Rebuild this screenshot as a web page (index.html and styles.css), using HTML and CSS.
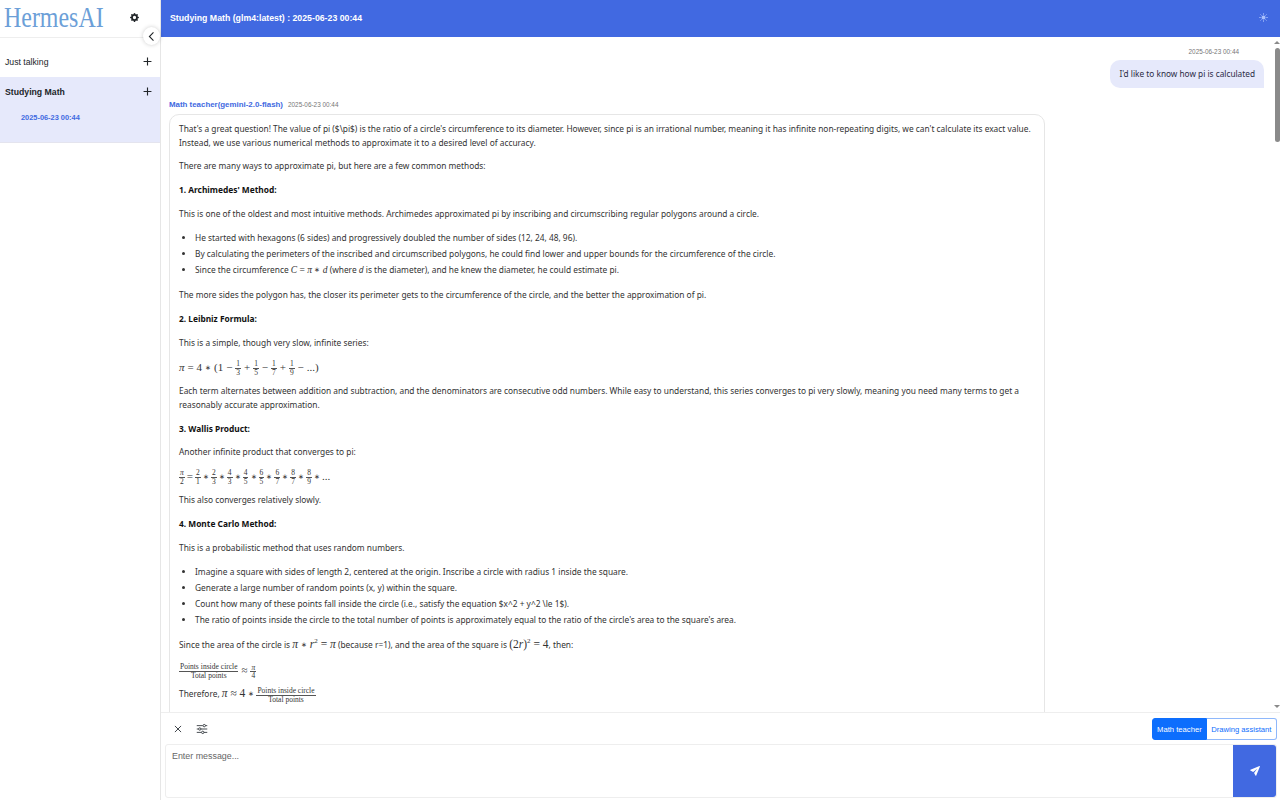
FILE: index.html
```html
<!DOCTYPE html>
<html lang="en">
<head>
	<meta charset="UTF-8">
	<title>HermesAI</title>
	<link rel="stylesheet" href="styles.css">
</head>
<body>
	<div class="app">
		<aside class="sidebar">
			<div class="brand">
				<span class="logo">HermesAI</span>
				<svg class="gear" viewBox="0 0 16 16"><path fill="#212529" d="M9.4 1.1c-.4-1.4-2.4-1.4-2.8 0l-.1.3a1.5 1.5 0 0 1-2.1.9l-.3-.2c-1.3-.7-2.7.7-2 2l.2.3a1.5 1.5 0 0 1-.9 2.1l-.3.1c-1.4.4-1.4 2.4 0 2.8l.3.1a1.5 1.5 0 0 1 .9 2.1l-.2.3c-.7 1.3.7 2.7 2 2l.3-.2a1.5 1.5 0 0 1 2.1.9l.1.3c.4 1.4 2.4 1.4 2.8 0l.1-.3a1.5 1.5 0 0 1 2.1-.9l.3.2c1.3.7 2.7-.7 2-2l-.2-.3a1.5 1.5 0 0 1 .9-2.1l.3-.1c1.4-.4 1.4-2.4 0-2.8l-.3-.1a1.5 1.5 0 0 1-.9-2.1l.2-.3c.7-1.3-.7-2.7-2-2l-.3.2a1.5 1.5 0 0 1-2.1-.9zM8 10.900a2.900 2.900 0 1 1 0-5.800 2.900 2.900 0 0 1 0 5.800z"/></svg>
			</div>
			<button class="collapse"><svg viewBox="0 0 16 16"><path fill="none" stroke="#212529" stroke-width="1.6" stroke-linecap="round" d="M10.5 2.5 5 8l5.500 5.500"/></svg></button>
			<div class="topics">
				<div class="topic">
					<div class="topic-row">
						<span>Just talking</span>
						<svg class="plus" viewBox="0 0 16 16"><path stroke="#212529" stroke-width="2" d="M8 1v14M1 8h14"/></svg>
					</div>
				</div>
				<div class="topic active">
					<div class="topic-row">
						<span>Studying Math</span>
						<svg class="plus" viewBox="0 0 16 16"><path stroke="#212529" stroke-width="2" d="M8 1v14M1 8h14"/></svg>
					</div>
					<div class="session">2025-06-23 00:44</div>
				</div>
			</div>
		</aside>
		<main class="main">
			<header class="header">
				<span>Studying Math (glm4:latest) : 2025-06-23 00:44</span>
				<svg class="sun" viewBox="0 0 16 16"><circle cx="8" cy="8" r="3.5" fill="#a9c0fb"/><path stroke="#a9c0fb" stroke-width="1.4" stroke-linecap="round" d="M8 1v1.500M8 13.500V15M1 8h1.500M13.500 8H15M3 3l1.100 1.100M11.900 11.900 13 13M3 13l1.100-1.100M11.900 4.100 13 3"/></svg>
			</header>
			<div class="chat-wrap">
				<section class="chat">
					<div class="user-msg">
						<div class="time">2025-06-23 00:44</div>
						<div class="user-bubble">I'd like to know how pi is calculated</div>
					</div>
					<div class="bot-msg">
						<div class="bot-head"><span class="bot-name">Math teacher(gemini-2.0-flash)</span><span class="time">2025-06-23 00:44</span></div>
						<div class="bot-bubble">
							<p>That's a great question! The value of pi ($\pi$) is the ratio of a circle's circumference to its diameter. However, since pi is an irrational number, meaning it has infinite non-repeating digits, we can't calculate its exact value. Instead, we use various numerical methods to approximate it to a desired level of accuracy.</p>
							<p>There are many ways to approximate pi, but here are a few common methods:</p>
							<p><strong>1. Archimedes' Method:</strong></p>
							<p>This is one of the oldest and most intuitive methods. Archimedes approximated pi by inscribing and circumscribing regular polygons around a circle.</p>
							<ul>
								<li>He started with hexagons (6 sides) and progressively doubled the number of sides (12, 24, 48, 96).</li>
								<li>By calculating the perimeters of the inscribed and circumscribed polygons, he could find lower and upper bounds for the circumference of the circle.</li>
								<li>Since the circumference <span class="m"><i>C</i> = <i>π</i> <span class="ast">∗</span> <i>d</i></span> (where <i>d</i> is the diameter), and he knew the diameter, he could estimate pi.</li>
							</ul>
							<p>The more sides the polygon has, the closer its perimeter gets to the circumference of the circle, and the better the approximation of pi.</p>
							<p><strong>2. Leibniz Formula:</strong></p>
							<p>This is a simple, though very slow, infinite series:</p>
							<p class="formula m"><i>π</i> = 4 <span class="ast">∗</span> (1 − <span class="frac"><span>1</span><span>3</span></span> + <span class="frac"><span>1</span><span>5</span></span> − <span class="frac"><span>1</span><span>7</span></span> + <span class="frac"><span>1</span><span>9</span></span> − ...)</p>
							<p>Each term alternates between addition and subtraction, and the denominators are consecutive odd numbers. While easy to understand, this series converges to pi very slowly, meaning you need many terms to get a reasonably accurate approximation.</p>
							<p><strong>3. Wallis Product:</strong></p>
							<p>Another infinite product that converges to pi:</p>
							<p class="formula tight m"><span class="frac"><span><i>π</i></span><span>2</span></span> = <span class="frac"><span>2</span><span>1</span></span> <span class="ast">∗</span> <span class="frac"><span>2</span><span>3</span></span> <span class="ast">∗</span> <span class="frac"><span>4</span><span>3</span></span> <span class="ast">∗</span> <span class="frac"><span>4</span><span>5</span></span> <span class="ast">∗</span> <span class="frac"><span>6</span><span>5</span></span> <span class="ast">∗</span> <span class="frac"><span>6</span><span>7</span></span> <span class="ast">∗</span> <span class="frac"><span>8</span><span>7</span></span> <span class="ast">∗</span> <span class="frac"><span>8</span><span>9</span></span> <span class="ast">∗</span> ...</p>
							<p>This also converges relatively slowly.</p>
							<p><strong>4. Monte Carlo Method:</strong></p>
							<p>This is a probabilistic method that uses random numbers.</p>
							<ul>
								<li>Imagine a square with sides of length 2, centered at the origin. Inscribe a circle with radius 1 inside the square.</li>
								<li>Generate a large number of random points (x, y) within the square.</li>
								<li>Count how many of these points fall inside the circle (i.e., satisfy the equation $x^2 + y^2 \le 1$).</li>
								<li>The ratio of points inside the circle to the total number of points is approximately equal to the ratio of the circle's area to the square's area.</li>
							</ul>
							<p>Since the area of the circle is <span class="m big"><i>π</i> <span class="ast">∗</span> <i>r</i><sup>2</sup> = <i>π</i></span> (because r=1), and the area of the square is <span class="m big">(2<i>r</i>)<sup>2</sup> = 4</span>, then:</p>
							<p class="formula m"><span class="frac wide"><span>Points inside circle</span><span>Total points</span></span> ≈ <span class="frac"><span><i>π</i></span><span>4</span></span></p>
							<p class="formula-line">Therefore, <span class="m big"><i>π</i> ≈ 4 <span class="ast">∗</span></span> <span class="m"><span class="frac wide"><span>Points inside circle</span><span>Total points</span></span></span></p>
						</div>
					</div>
				</section>
				<div class="scrollbar">
					<span class="arrow-up"></span>
					<div class="track"><span class="thumb"></span></div>
					<span class="arrow-down"></span>
				</div>
			</div>
			<div class="composer">
				<div class="tools">
					<div class="tool-icons">
						<svg class="tool" viewBox="0 0 16 16"><path stroke="#343a40" stroke-width="1.5" stroke-linecap="round" d="m3.500 3.500 9 9M12.500 3.500l-9 9"/></svg>
						<svg class="tool sliders" viewBox="0 0 16 16"><path fill="none" stroke="#343a40" stroke-width="1.2" d="M1 3.500h8M12.500 3.500H15M1 8h2M6.500 8H15M1 12.500h6M10.500 12.500H15"/><circle cx="11" cy="3.500" r="1.600" fill="none" stroke="#343a40" stroke-width="1.200"/><circle cx="5" cy="8" r="1.600" fill="none" stroke="#343a40" stroke-width="1.200"/><circle cx="9" cy="12.500" r="1.600" fill="none" stroke="#343a40" stroke-width="1.200"/></svg>
					</div>
					<div class="agents">
						<button class="agent on">Math teacher</button>
						<button class="agent">Drawing assistant</button>
					</div>
				</div>
				<div class="input-row">
					<div class="input">Enter message...</div>
					<button class="send"><svg viewBox="0 0 16 16"><path fill="#fff" d="M15.800.2a.5.5 0 0 1 .1.6L10 15.300c-.2.5-.9.5-1.100.1L6.500 11 11.500 4.500 5 9.500.6 7.100C.1 6.900.1 6.200.7 6L15.200.1a.5.5 0 0 1 .6.1z"/></svg></button>
				</div>
			</div>
		</main>
	</div>
</body>
</html>
```

FILE: styles.css
```css
*{
	box-sizing: border-box;
}
html,body{
	margin: 0;
	height: 100%;
	overflow: hidden;
}
body{
	font-family: "Liberation Sans", Arial, sans-serif;
	color: #212529;
	background: #fff;
}
.app{
	display: flex;
	height: 800px;
}
.sidebar{
	position: relative;
	width: 161px;
	flex-shrink: 0;
	border-right: 1px solid #e6e6e6;
}
.brand{
	display: flex;
	justify-content: space-between;
	align-items: center;
	height: 38px;
	padding: 0 21px 2px 4px;
	border-bottom: 1px solid #eee;
}
.logo{
	width: 98px;
	font-family: "Liberation Serif", serif;
	font-size: 29px;
	color: #6c9fd8;
	transform: scaleX(.825);
	transform-origin: left;
	white-space: nowrap;
}
.gear{
	width: 9px;
	height: 9px;
}
.collapse{
	position: absolute;
	top: 27px;
	left: 143px;
	width: 17px;
	height: 18px;
	padding: 3px;
	display: flex;
	align-items: center;
	border: 0;
	border-radius: 50%;
	background: #fff;
	box-shadow: 0 0 4px rgba(0,0,0,.2);
}
.collapse svg{
	width: 11px;
	height: 11px;
}
.topics{
	padding-top: 9px;
}
.topic-row{
	display: flex;
	justify-content: space-between;
	align-items: center;
	height: 30px;
	padding: 0 8px 1px 5px;
	font-size: 8.7px;
}
.plus{
	width: 9px;
	height: 9px;
}
.active{
	background: #e6e9fb;
	border-bottom: 1px solid #e4e4ee;
	height: 66px;
}
.active .topic-row{
	font-weight: bold;
}
.session{
	padding: 6px 0 0 21px;
	font-size: 7.4px;
	font-weight: bold;
	color: #4169e1;
}
.main{
	flex: 1;
	min-width: 0;
	display: flex;
	flex-direction: column;
}
.header{
	display: flex;
	justify-content: space-between;
	align-items: center;
	height: 37px;
	flex-shrink: 0;
	padding: 0 12px 2px 9px;
	background: #4169e1;
	color: #fff;
	font-size: 8.75px;
	font-weight: bold;
}
.sun{
	width: 9px;
	height: 9px;
}
.chat-wrap{
	position: relative;
	flex: 1;
	min-height: 0;
}
.chat{
	height: 100%;
	overflow: hidden;
	padding: 10px 16px 0 8px;
}
.scrollbar{
	position: absolute;
	top: 0;
	right: 0;
	bottom: 0;
	width: 6px;
	display: flex;
	flex-direction: column;
	align-items: center;
	padding: 4px 0;
}
.arrow-up,.arrow-down{
	width: 0;
	height: 0;
	border-left: 3px solid transparent;
	border-right: 3px solid transparent;
}
.arrow-up{
	border-bottom: 3px solid #8a8a8a;
}
.arrow-down{
	border-top: 3px solid #8a8a8a;
}
.track{
	flex: 1;
	width: 100%;
	padding-top: 4px;
}
.thumb{
	display: block;
	width: 5px;
	height: 94px;
	margin: 0 auto;
	background: #8a8a8a;
	border-radius: 3px;
}
.user-msg{
	display: flex;
	flex-direction: column;
	align-items: flex-end;
}
.time{
	font-size: 6.4px;
	color: #777;
}
.user-msg .time{
	margin-right: 25px;
	line-height: 9px;
}
.user-bubble{
	margin-top: 4px;
	height: 28px;
	padding: 0 9px;
	line-height: 28px;
	border-radius: 10px 10px 0 10px;
	background: #e6e9fb;
	font-family: "Noto Sans", sans-serif;
	font-size: 8.27px;
	color: #2b2b45;
}
.bot-msg{
	margin-top: 11px;
}
.bot-head{
	display: flex;
	align-items: center;
	gap: 5px;
	height: 11px;
}
.bot-name{
	font-size: 7.9px;
	font-weight: bold;
	color: #4169e1;
}
.bot-bubble{
	width: 876px;
	height: 700px;
	margin-top: 4px;
	padding: 7px 9px;
	border: 1px solid #e6e6e6;
	border-radius: 10px;
	font-family: "Noto Sans", sans-serif;
	font-size: 8.35px;
	line-height: 13.6px;
	color: #333;
}
.bot-bubble p{
	margin: 0 0 10.3px;
}
.bot-bubble strong{
	color: #111;
}
.bot-bubble ul{
	margin: -1px 0 10.3px;
	padding-left: 16px;
}
.bot-bubble li{
	line-height: 16px;
}
.bot-bubble li .m{
	font-size: 9.5px;
}
.m{
	font-family: "Liberation Serif", serif;
}
.ast{
	font-size: 7px;
	vertical-align: 1px;
}
.bot-bubble .formula{
	font-size: 11px;
	height: 13.6px;
	white-space: nowrap;
	word-spacing: .2px;
}
.bot-bubble .tight{
	word-spacing: -.7px;
}
.big{
	font-size: 11.5px;
}
.big sup{
	font-size: 7px;
	line-height: 0;
}
.frac{
	display: inline-flex;
	flex-direction: column;
	align-items: center;
	vertical-align: middle;
	font-size: 7.5px;
	line-height: 7.5px;
}
.frac span:first-child{
	border-bottom: 1px solid #555;
	padding: 0 1px;
	width: 100%;
	text-align: center;
}
.frac.wide{
	font-size: 7.5px;
	line-height: 8px;
}
.composer{
	flex-shrink: 0;
	height: 88px;
	border-top: 1px solid #eee;
	padding: 5px 3px 3px 4px;
}
.tools{
	display: flex;
	justify-content: space-between;
	align-items: center;
	height: 22px;
}
.tool-icons{
	display: flex;
	align-items: center;
	gap: 13px;
	padding-left: 8px;
}
.tool{
	width: 10px;
	height: 10px;
}
.tool.sliders{
	width: 12px;
	height: 12px;
}
.agents{
	display: flex;
}
.agent{
	height: 22px;
	padding: 0 4.5px;
	border: 1px solid #8fb8fb;
	background: #fff;
	color: #0d6efd;
	font-family: "Liberation Sans", Arial, sans-serif;
	font-size: 7.65px;
	border-radius: 0 3px 3px 0;
	border-left: 0;
}
.agent.on{
	padding: 0 4px;
	background: #0d6efd;
	color: #fff;
	border-radius: 3px 0 0 3px;
	border: 1px solid #0d6efd;
}
.input-row{
	display: flex;
	height: 54px;
	margin-top: 4px;
	border: 1px solid #eee;
	border-radius: 3px;
}
.input{
	flex: 1;
	padding: 6px;
	font-size: 8.9px;
	color: #666;
}
.send{
	width: 43px;
	border: 0;
	border-radius: 0 3px 3px 0;
	background: #4169e1;
	display: flex;
	align-items: center;
	justify-content: center;
	padding: 0;
}
.send svg{
	width: 10px;
	height: 10px;
}
```
